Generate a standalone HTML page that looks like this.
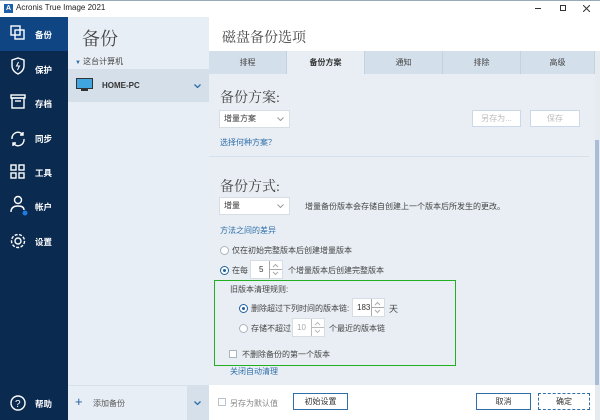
<!DOCTYPE html>
<html><head><meta charset="utf-8"><style>
*{margin:0;padding:0;box-sizing:border-box}
body{width:600px;height:420px;overflow:hidden;font-family:"Liberation Sans","Noto Sans CJK SC",sans-serif;font-size:8px;color:#333;background:#fff;position:relative}
.a{position:absolute}
.side{left:0;top:17px;width:68px;height:403px;background:#0b2a50}
.act{left:0;top:17px;width:68px;height:34px;background:#0f4582}
.si{color:#fff;font-size:8.5px;font-weight:bold;left:35px}
.mid{left:68px;top:17px;width:141px;height:403px;background:#e8eef5}
.right{left:209px;top:51px;width:386px;height:334px;background:#e8eef4}
.tab{top:51px;height:23px;background:#d3dfea;text-align:center;line-height:23px;font-size:8px;color:#444;border-right:1px solid #c4d2df}
.dd{background:#fff;border:1px solid #d6dde5;height:18px;line-height:16px;padding-left:4px;font-size:8px;color:#333}
.h{font-family:"Liberation Serif","Noto Serif CJK SC",serif;font-size:14px;color:#444}
.lnk{color:#2f6ea9;font-size:8px}
.rad{width:9px;height:9px;border:1px solid #aab5c0;border-radius:50%;background:#fff}
.rad.on:after{content:"";position:absolute;left:2px;top:2px;width:3px;height:3px;border-radius:50%;background:#1f5f9e}
.rad.on{border-color:#1f5f9e}
.spin{background:#fff;border:1px solid #d6dde5;height:19px}
.spin svg{position:absolute;right:0;top:0}
.btn{border:1px solid #2f6ea9;background:#fff;text-align:center;font-size:8px;color:#333;line-height:15px}
.chev{position:absolute;right:5px;top:6px}
</style></head><body>
<div class="a" style="left:0;top:0;width:600px;height:17px;background:#fff;border-top:1px solid #9ab"></div>
<div class="a" style="left:4px;top:4px;width:9px;height:9px;background:#1f5fa8;color:#fff;font-size:7px;font-weight:bold;text-align:center;line-height:9px">A</div>
<div class="a" style="left:16px;top:3px;font-size:8px;color:#222">Acronis True Image 2021</div>
<div class="a" style="left:535px;top:8px;width:6px;height:1px;background:#333"></div>
<div class="a" style="left:560px;top:5px;width:6px;height:6px;border:1px solid #333"></div>
<svg class="a" style="left:583px;top:5px" width="7" height="7" stroke="#333"><path d="M0 0L7 7M7 0L0 7"/></svg>

<div class="a side"></div><div class="a act"></div>
<svg class="a" style="left:0;top:17px" width="68" height="403" fill="none" stroke="#fff" stroke-width="1.4">
<rect x="11" y="9" width="9" height="9"/><rect x="15" y="13" width="9" height="9"/>
<path d="M12 43 L18 41 L24 43 V49 Q24 54 18 57 Q12 54 12 49Z"/><path d="M18.5 45 L16.5 49 H19.5 L17.5 53" stroke-width="1"/>
<rect x="11" y="78" width="14" height="3"/><rect x="12" y="81" width="12" height="10"/><path d="M15 84 H21"/>
<path d="M12 122 A6 6 0 0 1 23 118 M24 122 A6 6 0 0 1 13 126 M23 115 V118 H20 M13 129 V126 H16"/>
<rect x="11" y="148" width="5" height="5"/><rect x="19" y="148" width="5" height="5"/><rect x="11" y="156" width="5" height="5"/><rect x="19" y="156" width="5" height="5"/>
<circle cx="18" cy="183" r="3.5"/><path d="M11 195 Q11 189 18 189 Q24 189 24 193"/>
<circle cx="25" cy="196" r="2.5" fill="#1e7be0" stroke="none"/>
<circle cx="18" cy="224" r="3"/><circle cx="18" cy="224" r="6.5" stroke-dasharray="3 1.5"/>
<circle cx="18" cy="386" r="7"/><text x="15" y="390" fill="#fff" stroke="none" font-size="10" font-family="Liberation Sans">?</text>
</svg>
<div class="a si" style="top:29px">备份</div>
<div class="a si" style="top:64px">保护</div>
<div class="a si" style="top:98px">存档</div>
<div class="a si" style="top:133px">同步</div>
<div class="a si" style="top:167px">工具</div>
<div class="a si" style="top:201px">帐户</div>
<div class="a si" style="top:236px">设置</div>
<div class="a si" style="top:398px">帮助</div>

<div class="a mid"></div>
<div class="a h" style="left:82px;top:25px;font-size:18px">备份</div>
<div class="a" style="left:75px;top:56px;font-size:8px;color:#444"><span style="color:#2f6ea9;font-size:6px">▼</span>&nbsp;这台计算机</div>
<div class="a" style="left:68px;top:69px;width:141px;height:33px;background:#d4dfea"></div>
<div class="a" style="left:76px;top:78px;width:17px;height:11px;background:#3fa6e0;border:1.5px solid #333"></div>
<div class="a" style="left:81px;top:89px;width:7px;height:2px;background:#333"></div>
<div class="a" style="left:102px;top:81px;font-size:8px;font-weight:bold;color:#333">HOME-PC</div>
<svg class="a" style="left:194px;top:84px" width="7" height="4" fill="none" stroke="#2f6ea9" stroke-width="1.3"><path d="M0.5 0.5L3.5 3.5L6.5 0.5"/></svg>
<div class="a" style="left:68px;top:385px;width:141px;height:35px;background:#e8eef5;border-top:1px solid #d8e0e8"></div>
<div class="a" style="left:187px;top:385px;width:22px;height:35px;background:#d5e0ea"></div>
<div class="a" style="left:75px;top:394px;font-size:13px;color:#1f5f9e">+</div>
<div class="a" style="left:93px;top:398px;font-size:8px;color:#555">添加备份</div>
<svg class="a" style="left:194px;top:401px" width="7" height="4" fill="none" stroke="#2f6ea9" stroke-width="1.3"><path d="M0.5 0.5L3.5 3.5L6.5 0.5"/></svg>

<div class="a" style="left:209px;top:17px;width:391px;height:34px;background:#fff"></div>
<div class="a h" style="left:222px;top:27px;font-size:14px">磁盘备份选项</div>
<div class="a right"></div>
<div class="a" style="left:595px;top:51px;width:5px;height:369px;background:#e6ebf0"></div>
<div class="a" style="left:595px;top:140px;width:4px;height:245px;background:#a9bdd6"></div>
<div class="a tab" style="left:209px;width:78px">排程</div>
<div class="a tab" style="left:287px;width:78px;background:#e8eef4;font-weight:bold;color:#333">备份方案</div>
<div class="a tab" style="left:365px;width:78px">通知</div>
<div class="a tab" style="left:443px;width:78px">排除</div>
<div class="a tab" style="left:521px;width:74px">高级</div>

<div class="a h" style="left:220px;top:87px">备份方案:</div>
<div class="a dd" style="left:219px;top:110px;width:71px">增量方案<svg class="chev" width="7" height="4" fill="none" stroke="#999"><path d="M0.5 0.5L3.5 3.5L6.5 0.5"/></svg></div>
<div class="a btn" style="left:472px;top:110px;width:49px;height:17px;border-color:#c9d9ea;color:#bbb">另存为...</div>
<div class="a btn" style="left:530px;top:110px;width:50px;height:17px;border-color:#c9d9ea;color:#bbb">保存</div>
<div class="a lnk" style="left:220px;top:137px">选择何种方案？</div>
<div class="a" style="left:209px;top:156px;width:380px;height:1px;background:#d6e0ea"></div>
<div class="a h" style="left:220px;top:176px">备份方式:</div>
<div class="a dd" style="left:219px;top:197px;width:71px">增量<svg class="chev" width="7" height="4" fill="none" stroke="#999"><path d="M0.5 0.5L3.5 3.5L6.5 0.5"/></svg></div>
<div class="a" style="left:305px;top:201px;font-size:8px;color:#444">增量备份版本会存储自创建上一个版本后所发生的更改。</div>
<div class="a lnk" style="left:220px;top:225px">方法之间的差异</div>
<div class="a rad" style="left:220px;top:246px"></div>
<div class="a" style="left:232px;top:245px;color:#444">仅在初始完整版本后创建增量版本</div>
<div class="a rad on" style="left:220px;top:266px"></div>
<div class="a" style="left:232px;top:265px;color:#444">在每</div>
<div class="a spin" style="left:250px;top:260px;width:33px"><span class="a" style="left:8px;top:4px">5</span><svg width="13" height="17" fill="none" stroke="#aaa"><path d="M0.5 0V17M0.5 8.5H13M4 6L6.5 3.5L9 6M4 11L6.5 13.5L9 11"/></svg></div>
<div class="a" style="left:288px;top:265px;color:#444">个增量版本后创建完整版本</div>

<div class="a" style="left:214px;top:280px;width:242px;height:86px;border:1.5px solid #22b022"></div>
<div class="a" style="left:230px;top:284px;color:#444">旧版本清理规则:</div>
<div class="a rad on" style="left:239px;top:304px"></div>
<div class="a" style="left:251px;top:303px;color:#444">删除超过下列时间的版本链:</div>
<div class="a spin" style="left:352px;top:298px;width:33px"><span class="a" style="left:4px;top:4px">183</span><svg width="13" height="17" fill="none" stroke="#aaa"><path d="M0.5 0V17M0.5 8.5H13M4 6L6.5 3.5L9 6M4 11L6.5 13.5L9 11"/></svg></div>
<div class="a" style="left:389px;top:302px;color:#444;font-size:9px">天</div>
<div class="a rad" style="left:239px;top:324px"></div>
<div class="a" style="left:251px;top:323px;color:#444">存储不超过</div>
<div class="a spin" style="left:292px;top:318px;width:33px"><span class="a" style="left:4px;top:4px;color:#aaa">10</span><svg width="13" height="17" fill="none" stroke="#bbb"><path d="M0.5 0V17M0.5 8.5H13M4 6L6.5 3.5L9 6M4 11L6.5 13.5L9 11"/></svg></div>
<div class="a" style="left:329px;top:323px;color:#444">个最近的版本链</div>
<div class="a" style="left:229px;top:350px;width:8px;height:8px;border:1px solid #aab5c0;background:#fff"></div>
<div class="a" style="left:242px;top:349px;color:#444">不删除备份的第一个版本</div>
<div class="a lnk" style="left:230px;top:366px">关闭自动清理</div>

<div class="a" style="left:209px;top:385px;width:386px;height:35px;background:#fff"></div>
<div class="a" style="left:218px;top:398px;width:8px;height:8px;border:1px solid #bbc4cc"></div>
<div class="a" style="left:230px;top:398px;color:#888">另存为默认值</div>
<div class="a btn" style="left:293px;top:393px;width:55px;height:17px">初始设置</div>
<div class="a btn" style="left:476px;top:393px;width:55px;height:17px">取消</div>
<div class="a btn" style="left:538px;top:393px;width:52px;height:17px;border-style:dashed">确定</div>
</body></html>
